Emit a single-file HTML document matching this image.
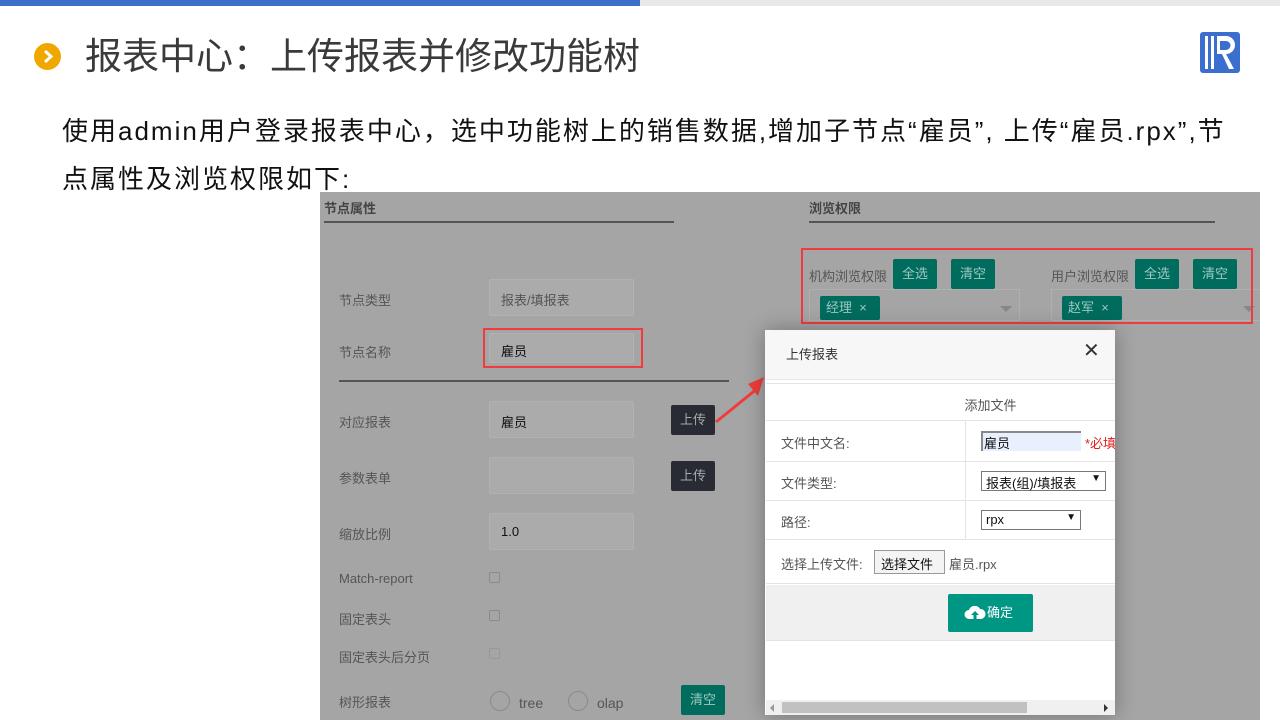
<!DOCTYPE html>
<html><head><meta charset="utf-8"><style>
*{margin:0;padding:0;box-sizing:border-box}
body{width:1280px;height:720px;position:relative;overflow:hidden;background:#fff;font-family:"Liberation Sans","Noto Sans CJK SC",sans-serif}
.a{position:absolute;white-space:nowrap}
.lbl{position:absolute;font-size:13px;color:#555}
.inp{position:absolute;left:489px;width:145px;height:37px;background:#ababab;border:1px solid #b2b2b2;font-size:13px;color:#111;padding:10px 11px;border-radius:2px}
.btn{position:absolute;background:#006c5e;color:#9fc8c0;font-size:13px;text-align:center;border-radius:2px}
.dk{position:absolute;background:#282b33;color:#a9a9a9;font-size:13px;text-align:center;border-radius:2px;width:44px;height:30px;line-height:30px;left:671px}
.cb{position:absolute;left:489px;width:11px;height:11px;border:1px solid #8a8a8a;border-radius:2px}
.row{position:absolute;left:1px;width:349px;border-bottom:1px solid #e4e4e4;font-size:13px;color:#555}
</style></head><body>
<div class="a" style="left:0;top:0;width:640px;height:6px;background:#3b6fc9"></div>
<div class="a" style="left:640px;top:0;width:640px;height:6px;background:#e8e8e8"></div>
<div class="a" style="left:34px;top:43px;width:27px;height:27px;border-radius:50%;background:#f0a800"></div>
<svg class="a" style="left:34px;top:43px" width="27" height="27"><path d="M11 8 L17 13.5 L11 19" stroke="#fff" stroke-width="3" fill="none"/></svg>
<div class="a" style="left:85px;top:33px;font-size:37px;color:#3a3a3a;line-height:48px">报表中心：上传报表并修改功能树</div>
<div class="a" style="left:1200px;top:32px;width:40px;height:41px;background:#3a6fd0;border-radius:3px"></div>
<svg class="a" style="left:1200px;top:32px" width="40" height="41"><rect x="5" y="4" width="3" height="33" fill="#fff"/><rect x="11" y="4" width="3" height="33" fill="#fff"/><path d="M17 4 H26 A9 9 0 0 1 26 22 L34 37 H29 L22 22 H17 Z M20 9 V18 H26 A4.5 4.5 0 0 0 26 9 Z" fill="#fff"/></svg>
<div class="a" style="left:62px;top:104px;font-size:26px;letter-spacing:2px;color:#111;line-height:54px">使用admin用户登录报表中心，选中功能树上的销售数据,增加子节点“雇员”, 上传“雇员.rpx”,节</div>
<div class="a" style="left:62px;top:152px;font-size:26px;letter-spacing:2px;color:#111;line-height:54px">点属性及浏览权限如下:</div>

<div class="a" style="left:320px;top:192px;width:940px;height:528px;background:#a5a5a5"></div>
<div class="a" style="left:324px;top:198px;font-size:13px;font-weight:bold;color:#444">节点属性</div>
<div class="a" style="left:324px;top:221px;width:350px;height:2px;background:#555"></div>
<div class="a" style="left:809px;top:198px;font-size:13px;font-weight:bold;color:#444">浏览权限</div>
<div class="a" style="left:809px;top:221px;width:406px;height:2px;background:#555"></div>

<div class="lbl" style="left:339px;top:290px">节点类型</div>
<div class="inp" style="top:279px;color:#555">报表/填报表</div>
<div class="lbl" style="left:339px;top:342px">节点名称</div>
<div class="inp" style="top:333px;height:30px;padding-top:7px">雇员</div>
<div class="a" style="left:483px;top:328px;width:160px;height:40px;border:2px solid #f03c3c"></div>
<div class="a" style="left:339px;top:380px;width:390px;height:2px;background:#555"></div>
<div class="lbl" style="left:339px;top:412px">对应报表</div>
<div class="inp" style="top:401px">雇员</div>
<div class="dk" style="top:405px">上传</div>
<div class="lbl" style="left:339px;top:468px">参数表单</div>
<div class="inp" style="top:457px"></div>
<div class="dk" style="top:461px">上传</div>
<div class="lbl" style="left:339px;top:524px">缩放比例</div>
<div class="inp" style="top:513px">1.0</div>
<div class="lbl" style="left:339px;top:571px">Match-report</div>
<div class="cb" style="top:572px"></div>
<div class="lbl" style="left:339px;top:609px">固定表头</div>
<div class="cb" style="top:610px"></div>
<div class="lbl" style="left:339px;top:647px">固定表头后分页</div>
<div class="cb" style="top:648px;border-color:#999"></div>
<div class="lbl" style="left:339px;top:692px">树形报表</div>
<div class="a" style="left:490px;top:691px;width:20px;height:20px;border:1px solid #8a8a8a;border-radius:50%"></div>
<div class="lbl" style="left:519px;top:695px;font-size:14px">tree</div>
<div class="a" style="left:568px;top:691px;width:20px;height:20px;border:1px solid #8a8a8a;border-radius:50%"></div>
<div class="lbl" style="left:597px;top:695px;font-size:14px">olap</div>
<div class="btn" style="left:681px;top:685px;width:44px;height:30px;line-height:30px">清空</div>

<div class="lbl" style="left:809px;top:266px">机构浏览权限</div>
<div class="btn" style="left:893px;top:259px;width:44px;height:30px;line-height:30px">全选</div>
<div class="btn" style="left:951px;top:259px;width:44px;height:30px;line-height:30px">清空</div>
<div class="a" style="left:809px;top:289px;width:211px;height:32px;border:1px solid #b0b0b0"></div>
<div class="btn" style="left:820px;top:296px;width:60px;height:24px;line-height:24px;text-align:left;padding-left:6px">经理 &nbsp;×</div>
<div class="a" style="left:1000px;top:306px;border:6px solid transparent;border-top-color:#888"></div>
<div class="lbl" style="left:1051px;top:266px">用户浏览权限</div>
<div class="btn" style="left:1135px;top:259px;width:44px;height:30px;line-height:30px">全选</div>
<div class="btn" style="left:1193px;top:259px;width:44px;height:30px;line-height:30px">清空</div>
<div class="a" style="left:1051px;top:289px;width:209px;height:32px;border:1px solid #b0b0b0;border-right:none"></div>
<div class="btn" style="left:1062px;top:296px;width:60px;height:24px;line-height:24px;text-align:left;padding-left:6px">赵军 &nbsp;×</div>
<div class="a" style="left:1243px;top:306px;border:6px solid transparent;border-top-color:#888"></div>
<div class="a" style="left:801px;top:248px;width:452px;height:76px;border:2px solid #f03c3c"></div>

<svg class="a" style="left:712px;top:370px" width="56" height="60"><path d="M4 52 L46 18" stroke="#f03c3c" stroke-width="3"/><path d="M52 7 L36 14 L46 26 Z" fill="#f03c3c"/></svg>

<div class="a" style="left:765px;top:330px;width:350px;height:385px;background:#fff;box-shadow:0 0 20px rgba(0,0,0,.3);overflow:hidden">
<div class="a" style="left:0;top:0;width:350px;height:50px;background:#f7f7f7;border-bottom:1px solid #e8e8e8"></div>
<div class="a" style="left:21px;top:14px;font-size:13px;color:#333">上传报表</div>
<div class="a" style="left:318px;top:8px;font-size:20px;color:#333">✕</div>
<div class="row" style="top:53px;height:38px;border-top:1px solid #e4e4e4;text-align:center;padding-top:11px;padding-left:100px">添加文件</div>
<div class="row" style="top:91px;height:41px"><span class="a" style="left:15px;top:12px">文件中文名:</span><span class="a" style="left:199px;top:0;width:1px;height:41px;background:#e4e4e4"></span><span class="a" style="left:215px;top:10px;width:100px;height:20px;background:#e8f0fe;border-top:2px solid #888;border-left:2px solid #888;color:#111;padding-left:1px">雇员</span><span class="a" style="left:319px;top:12px;color:#e02020">*必填</span></div>
<div class="row" style="top:132px;height:39px"><span class="a" style="left:15px;top:11px">文件类型:</span><span class="a" style="left:199px;top:0;width:1px;height:39px;background:#e4e4e4"></span><span class="a" style="left:215px;top:9px;width:125px;height:20px;border:1px solid #777;color:#111;padding:1px 4px">报表(组)/填报表 <span style="float:right;font-size:10px">▼</span></span></div>
<div class="row" style="top:171px;height:39px"><span class="a" style="left:15px;top:11px">路径:</span><span class="a" style="left:199px;top:0;width:1px;height:39px;background:#e4e4e4"></span><span class="a" style="left:215px;top:9px;width:100px;height:20px;border:1px solid #777;color:#111;padding:1px 4px">rpx<span style="float:right;font-size:10px">▼</span></span></div>
<div class="row" style="top:210px;height:44px"><span class="a" style="left:15px;top:14px">选择上传文件:</span><span class="a" style="left:108px;top:10px;width:71px;height:24px;border:1px solid #999;background:#f4f4f4;color:#111;padding:3px 6px">选择文件</span><span class="a" style="left:183px;top:14px">雇员.rpx</span></div>
<div class="a" style="left:1px;top:255px;width:349px;height:56px;background:#f0f0f0;border-bottom:1px solid #e4e4e4"></div>
<div class="a" style="left:183px;top:264px;width:85px;height:38px;background:#009684;border-radius:2px;color:#fff;font-size:13px;line-height:38px;padding-left:39px">确定</div>
<svg class="a" style="left:199px;top:274px" width="22" height="16"><path d="M5 15 A4.5 4.5 0 0 1 5 6 A6 6 0 0 1 16 5 A5 5 0 0 1 17 15 Z" fill="#fff"/><path d="M11 7 L7 11 H9.5 V15 H12.5 V11 H15 Z" fill="#009684"/></svg>
<div class="a" style="left:1px;top:370px;width:349px;height:15px;background:#f0f0f0"></div>
<div class="a" style="left:17px;top:372px;width:245px;height:11px;background:#c1c1c1"></div>
<div class="a" style="left:5px;top:374px;border:4px solid transparent;border-right-color:#999;border-left:none"></div>
<div class="a" style="left:339px;top:374px;border:4px solid transparent;border-left-color:#333;border-right:none"></div>
</div>
</body></html>
